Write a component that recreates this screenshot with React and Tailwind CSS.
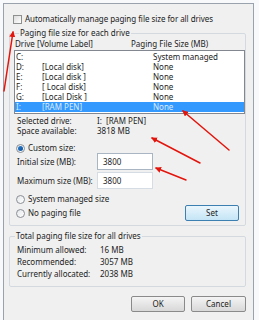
const drives = [
  { letter: 'C:', label: '', size: 'System managed' },
  { letter: 'D:', label: '[Local disk]', size: 'None' },
  { letter: 'E:', label: '[Local disk ]', size: 'None' },
  { letter: 'F:', label: '[ Local disk]', size: 'None' },
  { letter: 'G:', label: '[Local Disk ]', size: 'None' },
  { letter: 'I:', label: '[RAM PEN]', size: 'None', selected: true },
]

function Radio({ checked }) {
  return (
    <span className="flex h-[9px] w-[9px] shrink-0 items-center justify-center rounded-full border border-[#8a8f96] bg-gradient-to-br from-[#e4e6e8] to-white">
      {checked && <span className="h-[5px] w-[5px] rounded-full bg-gradient-to-br from-[#2a7fd0] to-[#0c4f9c]" />}
    </span>
  )
}

function Button({ children, focused, className = '' }) {
  return (
    <div
      className={
        'flex h-[16px] items-center justify-center rounded-[2px] border ' +
        (focused
          ? 'border-[#3c7fb1] bg-gradient-to-b from-[#eaf6fd] to-[#c4e5f6] '
          : 'border-[#8a8a8a] bg-gradient-to-b from-[#f4f4f4] to-[#d8d8d8] ') +
        className
      }
    >
      {children}
    </div>
  )
}

export default function App() {
  return (
    <div className="relative h-[320px] w-[259px] overflow-hidden bg-[#f8f9fb] font-['Noto_Sans',sans-serif] text-[8px] leading-[10px] text-[#222]">
      <div className="ml-[3px] mt-[3px] h-[317px] w-[251px] border-l border-r border-t border-[#9aa3ad] bg-[#f0f0f0] pl-[5px] pr-[5px]">
        {/* auto manage */}
        <div className="mt-[10px] flex h-[10px] items-center gap-[3px] pl-[4px]">
          <span className="h-[9px] w-[9px] border border-[#8e8f8f] bg-gradient-to-br from-[#dcdcdc] to-white" />
          <span className="tracking-[-0.05px]">Automatically manage paging file size for all drives</span>
        </div>

        <fieldset className="mt-[4px] w-[237px] rounded-[2px] border border-[#d3d9de] pb-[4px] pl-[4px]">
          <legend className="ml-[5px] px-[1px]">Paging file size for each drive</legend>
          <div className="flex h-[12px] items-center">
            <span className="w-[23px] pl-[1px]">Drive</span>
            <span className="w-[94px]">[Volume Label]</span>
            <span>Paging File Size (MB)</span>
          </div>
          <div className="border border-[#828790] bg-white py-[1px]">
            {drives.map((d) => (
              <div
                key={d.letter}
                className={'flex h-[10px] items-center ' + (d.selected ? 'bg-[#3399ff] text-[#dcebff]' : '')}
              >
                <span className="w-[27px] pl-[1px]">{d.letter}</span>
                <span className="w-[111px]">{d.label}</span>
                <span>{d.size}</span>
              </div>
            ))}
          </div>

          <div className="mt-[2px] pl-[3px]">
            <div className="flex h-[10px] items-center">
              <span className="w-[80px]">Selected drive:</span>
              <span>I:&nbsp;&nbsp;[RAM PEN]</span>
            </div>
            <div className="flex h-[10px] items-center">
              <span className="w-[80px]">Space available:</span>
              <span>3818 MB</span>
            </div>
          </div>

          <div className="mt-[7px] flex h-[10px] items-center gap-[3px] pl-[2px]">
            <Radio checked />
            <span>Custom size:</span>
          </div>
          <div className="flex h-[17px] items-center pl-[3px]">
            <span className="w-[80px]">Initial size (MB):</span>
            <div className="flex h-[17px] w-[56px] items-center border border-[#a9b5c2] bg-white pl-[5px]">3800</div>
          </div>
          <div className="mt-[2px] flex h-[17px] items-center pl-[3px]">
            <span className="w-[80px]">Maximum size (MB):</span>
            <div className="flex h-[17px] w-[56px] items-center border border-[#d5dce3] bg-white pl-[5px]">3800</div>
          </div>

          <div className="mt-[5px] flex h-[10px] items-center gap-[3px] pl-[2px]">
            <Radio />
            <span>System managed size</span>
          </div>
          <div className="mt-[1px] flex h-[16px] items-center justify-between pl-[2px] pr-[6px]">
            <div className="flex items-center gap-[3px]">
              <Radio />
              <span>No paging file</span>
            </div>
            <Button focused className="w-[54px]">Set</Button>
          </div>
        </fieldset>

        <fieldset className="mt-[5px] w-[237px] rounded-[2px] border border-[#d3d9de] pb-[6px] pl-[7px]">
          <legend className="-ml-[2px] px-[1px]">Total paging file size for all drives</legend>
          <div className="mt-[3px] flex h-[12px] items-center">
            <span className="w-[83px]">Minimum allowed:</span>
            <span>16 MB</span>
          </div>
          <div className="flex h-[12px] items-center">
            <span className="w-[83px]">Recommended:</span>
            <span>3057 MB</span>
          </div>
          <div className="flex h-[12px] items-center">
            <span className="w-[83px]">Currently allocated:</span>
            <span>2038 MB</span>
          </div>
        </fieldset>

        <div className="mt-[9px] flex justify-end gap-[6px] pr-[2px]">
          <Button className="w-[54px]">OK</Button>
          <Button className="w-[55px]">Cancel</Button>
        </div>
      </div>

      {/* red annotation arrows */}
      <svg className="pointer-events-none absolute left-0 top-0" width="259" height="320" viewBox="0 0 259 320">
        <defs>
          <marker id="head" markerWidth="6" markerHeight="6" refX="5" refY="3" orient="auto" markerUnits="userSpaceOnUse">
            <path d="M0,0 L6,3 L0,6 Z" fill="#e3140c" />
          </marker>
        </defs>
        <g stroke="#e3140c" strokeWidth="1.5" strokeLinecap="round" markerEnd="url(#head)">
          <line x1="4" y1="91" x2="13" y2="32" />
          <line x1="229" y1="150" x2="183" y2="111" />
          <line x1="200" y1="163" x2="152" y2="138" />
          <line x1="186" y1="180" x2="156" y2="168" />
        </g>
      </svg>
    </div>
  )
}
